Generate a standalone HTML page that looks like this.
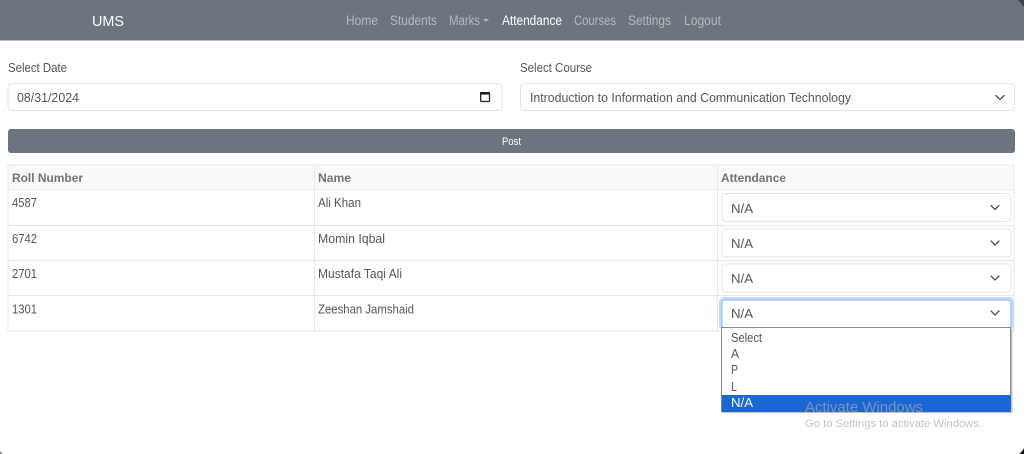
<!DOCTYPE html>
<html lang="en">
<head>
<meta charset="utf-8">
<title>UMS Attendance</title>
<style>
html,body{margin:0;padding:0;background:#fff;width:1024px;height:454px;overflow:hidden}
svg{display:block;position:absolute;left:0;top:0}
text{font-family:"Liberation Sans",sans-serif;font-size:13px;fill:#50575e}
.nav{font-size:13.5px;fill:#b4b9bd}
.h{font-weight:bold;font-size:12px;fill:#6c757d}
.f{fill:#fff;stroke:#e1e4e8;stroke-width:1}
.c{fill:none;stroke:#4a5158;stroke-width:1.25;stroke-linecap:round;stroke-linejoin:round}
.l{stroke:#e6e9ec;stroke-width:1}
</style>
</head>
<body>
<svg width="1024" height="454" viewBox="0 0 1024 454" xmlns="http://www.w3.org/2000/svg">
<rect width="1024" height="454" fill="#fff"/>
<!-- navbar -->
<rect width="1024" height="40.5" fill="#6c757d"/>
<text x="92" y="26" textLength="32" lengthAdjust="spacingAndGlyphs" style="font-size:15px;fill:#fff">UMS</text>
<text class="nav" x="346" y="25" textLength="32" lengthAdjust="spacingAndGlyphs">Home</text>
<text class="nav" x="390" y="25" textLength="47" lengthAdjust="spacingAndGlyphs">Students</text>
<text class="nav" x="449" y="25" textLength="31" lengthAdjust="spacingAndGlyphs">Marks</text>
<path d="M483 19h6l-3 3z" fill="#b5babe"/>
<text class="nav" x="502" y="25" textLength="60" lengthAdjust="spacingAndGlyphs" style="fill:#fff">Attendance</text>
<text class="nav" x="574" y="25" textLength="42" lengthAdjust="spacingAndGlyphs">Courses</text>
<text class="nav" x="628" y="25" textLength="43" lengthAdjust="spacingAndGlyphs">Settings</text>
<text class="nav" x="684" y="25" textLength="37" lengthAdjust="spacingAndGlyphs">Logout</text>
<path d="M1018 0h6v7q-3-4-6-7z" fill="#39414a"/>
<path d="M1024 454h-5q3-2 5-6z" fill="#111"/>
<path d="M0 454v-3l3 3z" fill="#8a8f94"/>
<!-- form -->
<text x="8" y="72" textLength="59" lengthAdjust="spacingAndGlyphs">Select Date</text>
<rect class="f" x="8" y="83.5" width="494" height="27" rx="4"/>
<text x="17" y="102" textLength="62" lengthAdjust="spacingAndGlyphs">08/31/2024</text>
<rect x="480.7" y="92.7" width="8.8" height="8.8" rx="1" fill="none" stroke="#212529" stroke-width="1.3"/>
<rect x="480" y="92" width="10" height="2.6" fill="#212529"/>
<text x="520" y="72" textLength="72" lengthAdjust="spacingAndGlyphs">Select Course</text>
<rect class="f" x="520.5" y="83.5" width="494" height="27" rx="4"/>
<text x="530" y="102" textLength="321" lengthAdjust="spacingAndGlyphs">Introduction to Information and Communication Technology</text>
<path class="c" d="M996 95.5l4 4 4-4"/>
<rect x="8" y="129" width="1007" height="24" rx="3" fill="#6c757d"/>
<text x="502" y="145" textLength="19" lengthAdjust="spacingAndGlyphs" style="font-size:11px;fill:#fff">Post</text>
<!-- table -->
<rect x="8" y="165" width="1006" height="25" fill="#f8f9fa"/>
<rect x="8" y="165" width="1006" height="166" fill="none" stroke="#e6e9ec"/>
<path class="l" d="M8 190h1006M8 225.500h1006M8 260.500h1006M8 295.500h1006M314.500 165v166M717.500 165v166"/>
<text class="h" x="12" y="182" textLength="71" lengthAdjust="spacingAndGlyphs">Roll Number</text>
<text class="h" x="318" y="182" textLength="33" lengthAdjust="spacingAndGlyphs">Name</text>
<text class="h" x="721" y="182" textLength="65" lengthAdjust="spacingAndGlyphs">Attendance</text>
<text x="12" y="207" textLength="25" lengthAdjust="spacingAndGlyphs">4587</text>
<text x="318" y="207" textLength="43" lengthAdjust="spacingAndGlyphs">Ali Khan</text>
<text x="12" y="243" textLength="25" lengthAdjust="spacingAndGlyphs">6742</text>
<text x="318" y="243" textLength="67" lengthAdjust="spacingAndGlyphs">Momin Iqbal</text>
<text x="12" y="278" textLength="25" lengthAdjust="spacingAndGlyphs">2701</text>
<text x="318" y="278" textLength="84" lengthAdjust="spacingAndGlyphs">Mustafa Taqi Ali</text>
<text x="12" y="313.500" textLength="25" lengthAdjust="spacingAndGlyphs">1301</text>
<text x="318" y="313.500" textLength="96" lengthAdjust="spacingAndGlyphs">Zeeshan Jamshaid</text>
<!-- row selects -->
<rect class="f" x="722" y="193.500" width="289" height="28" rx="4"/>
<text x="731" y="213" textLength="22" lengthAdjust="spacingAndGlyphs">N/A</text>
<path class="c" d="M991 205.500l4 4 4-4"/>
<rect class="f" x="722" y="229" width="289" height="28" rx="4"/>
<text x="731" y="248" textLength="22" lengthAdjust="spacingAndGlyphs">N/A</text>
<path class="c" d="M991 241l4 4 4-4"/>
<rect class="f" x="722" y="264" width="289" height="28" rx="4"/>
<text x="731" y="283" textLength="22" lengthAdjust="spacingAndGlyphs">N/A</text>
<path class="c" d="M991 276l4 4 4-4"/>
<rect x="719" y="297" width="295" height="33" rx="5" fill="#c6dafc"/>
<rect x="722" y="300" width="289" height="28" rx="3" fill="#fff" stroke="#86b7fe"/>
<text x="731" y="318" textLength="22" lengthAdjust="spacingAndGlyphs">N/A</text>
<path class="c" d="M991 311l4 4 4-4"/>
<!-- dropdown -->
<rect x="722" y="329" width="290.500" height="84" fill="#c4c4c4"/>
<rect x="721.500" y="327.500" width="289" height="84" fill="#fff" stroke="#8a8a8a"/>
<rect x="722" y="395" width="289" height="17" fill="#1a66d2"/>
<text x="731" y="342" textLength="31" lengthAdjust="spacingAndGlyphs">Select</text>
<text x="731" y="358" textLength="8" lengthAdjust="spacingAndGlyphs">A</text>
<text x="731" y="374" textLength="7" lengthAdjust="spacingAndGlyphs">P</text>
<text x="731" y="391" textLength="6" lengthAdjust="spacingAndGlyphs">L</text>
<text x="731" y="407" textLength="22" lengthAdjust="spacingAndGlyphs" style="fill:#fff">N/A</text>
<!-- watermark -->
<text x="805" y="412" textLength="118" lengthAdjust="spacingAndGlyphs" style="font-size:14.5px;fill:#a4a9ae;fill-opacity:.7">Activate Windows</text>
<text x="805" y="427" textLength="177" lengthAdjust="spacingAndGlyphs" style="font-size:11px;fill:#c0c2c4">Go to Settings to activate Windows.</text>
</svg>
</body>
</html>
